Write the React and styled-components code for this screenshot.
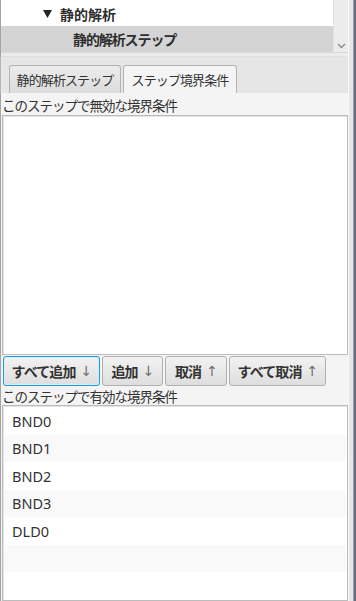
import React from 'react'
import styled, { createGlobalStyle } from 'styled-components'

const GlobalStyle = createGlobalStyle`
  html, body {
    margin: 0;
    padding: 0;
    height: 100%;
    background: #f4f4f4;
  }
  #root {
    height: 100%;
  }
  * {
    box-sizing: border-box;
  }
`

const Frame = styled.div`
  display: flex;
  height: 601px;
  overflow: hidden;
  font-family: "Noto Sans", "Noto Sans CJK JP", sans-serif;
  color: #333;
`
const Panel = styled.div`
  width: 348px;
  display: flex;
  flex-direction: column;
  border-left: 1px solid #a4a4a4;
  background: #f4f4f4;
`
const Divider = styled.div`
  width: 6px;
  background: #e6e6e6;
  border-left: 1px solid #fafafa;
  border-right: 1px solid #9c9c9c;
`
const Edge = styled.div`
  width: 2px;
  background: #6b6b86;
`

const Tree = styled.div`
  display: flex;
  height: 52px;
  background: #fff;
`
const TreeBody = styled.div`
  flex: 1;
  display: flex;
  flex-direction: column;
  padding-top: 1px;
`
const TreeRow = styled.div`
  height: ${p => p.h}px;
  display: flex;
  align-items: center;
  gap: 8px;
  padding-left: ${p => p.indent}px;
  background: ${p => (p.selected ? '#d4d4d4' : '#fff')};
  font-size: 14px;
  font-weight: 700;
  letter-spacing: ${p => (p.tight ? '-1.1px' : '0')};
  color: #2e2e2e;
`
const ScrollBar = styled.div`
  width: 15px;
  background: #ececec;
  border-left: 1px solid #e2e2e2;
  display: flex;
  align-items: flex-end;
  justify-content: center;
  padding-bottom: 3px;
`
const TreeFoot = styled.div`
  height: 5px;
  background: #ececec;
  border-top: 1px solid #d8d8d8;
  border-bottom: 1px solid #e0e0e0;
`

const TabHeader = styled.div`
  height: 36px;
  display: flex;
  align-items: flex-end;
  gap: 2px;
  padding-left: 8px;
  background: #e6e6e6;
  border-left: 1px solid #b8b8b8;
  margin-left: -1px;
`
const Tab = styled.div`
  width: ${p => p.w}px;
  height: 28px;
  display: flex;
  align-items: center;
  justify-content: center;
  border: 1px solid #b4b4b4;
  border-bottom: none;
  border-radius: 3px 3px 0 0;
  background: ${p => (p.active ? '#f4f4f4' : 'linear-gradient(#ececec, #dcdcdc)')};
  font-size: 13px;
  letter-spacing: -0.9px;
  color: #333;
`

const Content = styled.div`
  flex: 1;
  display: flex;
  flex-direction: column;
  padding: 0 0 0 1px;
  min-height: 0;
`
const Caption = styled.div`
  height: ${p => p.h}px;
  display: flex;
  align-items: center;
  font-size: 13.5px;
  letter-spacing: -1px;
  color: #333;
  padding-top: 1px;
`
const ListBox = styled.div`
  height: ${p => p.h}px;
  flex: ${p => (p.grow ? 1 : 'none')};
  background: #fff;
  border: 1px solid #bcbcbc;
  box-shadow: inset 1px 1px 0 #e4e4e4;
  padding: 1px;
  overflow: hidden;
`
const Item = styled.div`
  height: 27.5px;
  display: flex;
  align-items: center;
  padding-left: 8px;
  font-size: 14.5px;
  background: ${p => (p.odd ? '#f9f9f9' : '#fff')};
  color: #333;
`

const ButtonRow = styled.div`
  display: flex;
  gap: 2px;
  padding: 1px 0 0 1px;
  height: 31px;
`
const Button = styled.div`
  width: ${p => p.w}px;
  height: 30px;
  display: flex;
  align-items: center;
  justify-content: center;
  gap: 5px;
  border: 1px solid ${p => (p.focus ? '#1f9bd6' : '#b0b0b0')};
  box-shadow: ${p => (p.focus ? 'inset 0 0 0 1px #d7eef9' : 'none')};
  border-radius: 3px;
  background: linear-gradient(#f2f2f2, #dedede);
  font-size: 14px;
  font-weight: 700;
  letter-spacing: -0.9px;
  color: #333;
`
const Arrow = styled.span`
  font-weight: 400;
  color: #707070;
  font-family: "DejaVu Sans", sans-serif;
  font-size: 14px;
`

const Chevron = () => (
  <svg width="9" height="6" viewBox="0 0 9 6">
    <path d="M1 1 L4.5 4.5 L8 1" fill="none" stroke="#8a8a8a" strokeWidth="1.3" />
  </svg>
)
const Disclosure = () => (
  <svg width="9" height="8" viewBox="0 0 9 8">
    <polygon points="0,0 9,0 4.5,8" fill="#222" />
  </svg>
)

const enabled = ['BND0', 'BND1', 'BND2', 'BND3', 'DLD0', '', '']

const App = () => {
  return (
    <Frame>
      <GlobalStyle />
      <Panel>
        <Tree>
          <TreeBody>
            <TreeRow h={25} indent={42}>
              <Disclosure />
              <span>静的解析</span>
            </TreeRow>
            <TreeRow h={26} indent={72} selected tight>
              静的解析ステップ
            </TreeRow>
          </TreeBody>
          <ScrollBar>
            <Chevron />
          </ScrollBar>
        </Tree>
        <TreeFoot />
        <TabHeader>
          <Tab w={112}>静的解析ステップ</Tab>
          <Tab w={114} active>ステップ境界条件</Tab>
        </TabHeader>
        <Content>
          <Caption h={22}>このステップで無効な境界条件</Caption>
          <ListBox h={240} />
          <ButtonRow>
            <Button w={97} focus>すべて追加<Arrow>↓</Arrow></Button>
            <Button w={61}>追加<Arrow>↓</Arrow></Button>
            <Button w={62}>取消<Arrow>↑</Arrow></Button>
            <Button w={97}>すべて取消<Arrow>↑</Arrow></Button>
          </ButtonRow>
          <Caption h={19}>このステップで有効な境界条件</Caption>
          <ListBox grow>
            {enabled.map((name, i) => (
              <Item key={i} odd={i % 2 === 1}>{name}</Item>
            ))}
          </ListBox>
        </Content>
      </Panel>
      <Divider />
      <Edge />
    </Frame>
  )
}

export default App
